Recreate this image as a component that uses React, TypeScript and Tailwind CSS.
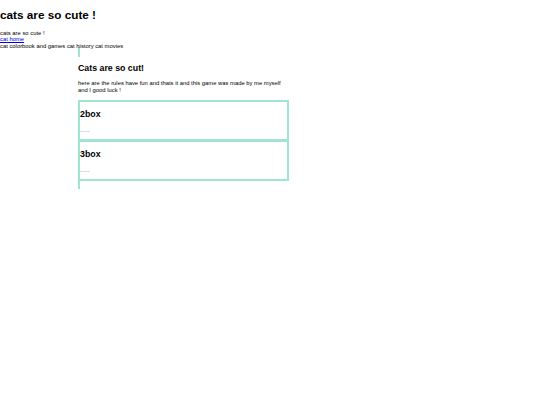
import React from 'react';

const boxes = ['2box', '3box'];

const App: React.FC = () => {
  return (
    <div className="min-h-[405px] w-[540px] bg-white text-black text-[5.85px] leading-[1.18] font-['Liberation_Sans',Arial,sans-serif]">
      <h1 className="my-[8px] text-[11.75px] font-bold leading-[1.15]">cats are so cute !</h1>
      <div>cats are so cute !</div>
      <div>
        <a href="#" className="text-[#0000ee] underline">cat home</a>
      </div>
      <div>cat colorbook and games cat history cat movies</div>

      <div className="ml-[78px] w-[211px] -mt-[3px]">
        <div className="h-[10px] border-l-2 border-[#9fe3d3]"></div>
        <h2 className="mt-[6px] mb-[7px] text-[8.8px] font-bold leading-[1.15]">Cats are so cut!</h2>
        <p className="mb-[6px]">
          here are the rules have fun and thats it and this game was made by me myself and I good luck !
        </p>
        {boxes.map((b) => (
          <div key={b} className="h-[41px] border-2 border-[#9fe3d3] [&+&]:-mt-px">
            <h2 className="mt-[7px] text-[8.8px] font-bold leading-[1.15]">{b}</h2>
            <div className="mt-[9px] text-[#9a9a9a]">-----</div>
          </div>
        ))}
        <div className="h-[8px] border-l-2 border-[#9fe3d3]"></div>
      </div>
    </div>
  );
};

export default App;
